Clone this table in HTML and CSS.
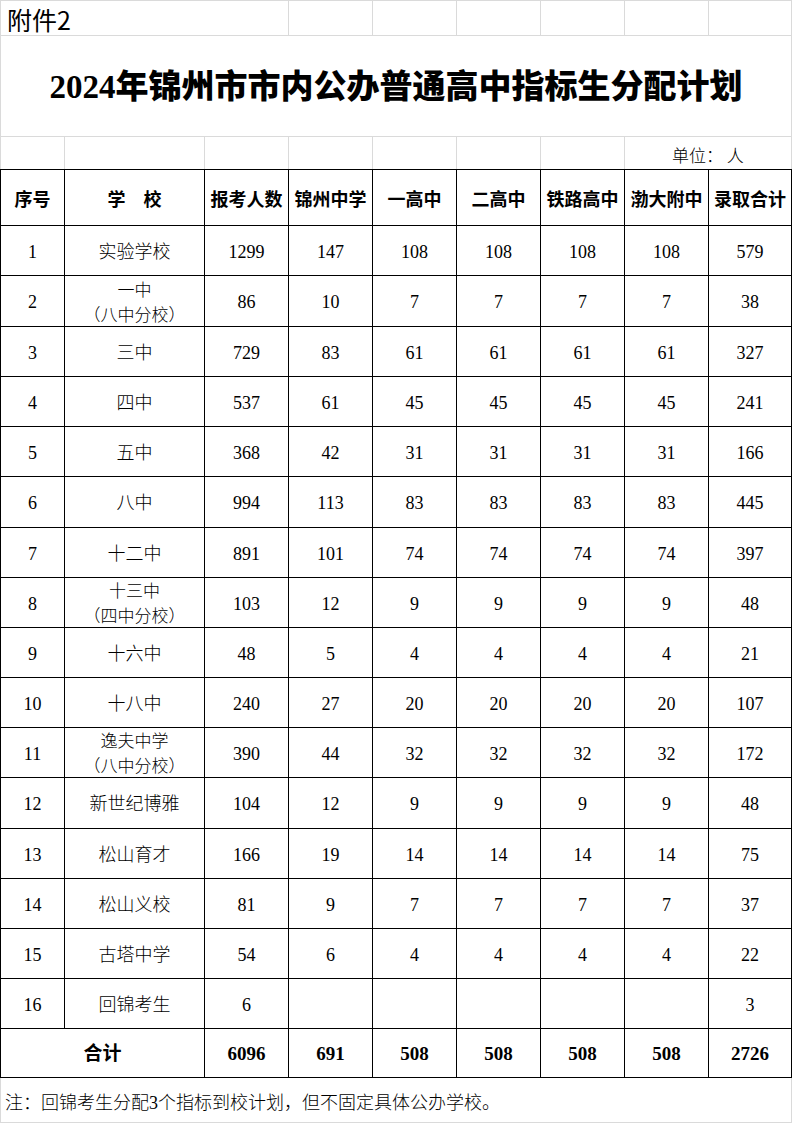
FILE: index.html
```html
<!DOCTYPE html>
<html lang="zh-CN">
<head>
<meta charset="utf-8">
<title>2024年锦州市市内公办普通高中指标生分配计划</title>
<link rel="stylesheet" href="styles.css">
</head>
<body>
<div class="sheet">
  <div class="top">
    <div class="cell attach span3">附件2</div>
    <div class="cell"></div><div class="cell"></div><div class="cell"></div>
    <div class="cell"></div><div class="cell"></div><div class="cell"></div>
    <div class="cell title span9"><span class="title-text">2024年锦州市市内公办普通高中指标生分配计划</span></div>
    <div class="cell"></div><div class="cell"></div><div class="cell"></div><div class="cell"></div>
    <div class="cell"></div><div class="cell"></div><div class="cell"></div>
    <div class="cell unit span2">单位：&nbsp;人</div>
  </div>
  <div class="table">
    <div class="cell head">序号</div>
    <div class="cell head">学　校</div>
    <div class="cell head">报考人数</div>
    <div class="cell head">锦州中学</div>
    <div class="cell head">一高中</div>
    <div class="cell head">二高中</div>
    <div class="cell head">铁路高中</div>
    <div class="cell head">渤大附中</div>
    <div class="cell head">录取合计</div>

    <div class="cell d">1</div><div class="cell d">实验学校</div><div class="cell d">1299</div><div class="cell d">147</div><div class="cell d">108</div><div class="cell d">108</div><div class="cell d">108</div><div class="cell d">108</div><div class="cell d">579</div>
    <div class="cell d">2</div><div class="cell d two">一中<br>（八中分校）</div><div class="cell d">86</div><div class="cell d">10</div><div class="cell d">7</div><div class="cell d">7</div><div class="cell d">7</div><div class="cell d">7</div><div class="cell d">38</div>
    <div class="cell d">3</div><div class="cell d">三中</div><div class="cell d">729</div><div class="cell d">83</div><div class="cell d">61</div><div class="cell d">61</div><div class="cell d">61</div><div class="cell d">61</div><div class="cell d">327</div>
    <div class="cell d">4</div><div class="cell d">四中</div><div class="cell d">537</div><div class="cell d">61</div><div class="cell d">45</div><div class="cell d">45</div><div class="cell d">45</div><div class="cell d">45</div><div class="cell d">241</div>
    <div class="cell d">5</div><div class="cell d">五中</div><div class="cell d">368</div><div class="cell d">42</div><div class="cell d">31</div><div class="cell d">31</div><div class="cell d">31</div><div class="cell d">31</div><div class="cell d">166</div>
    <div class="cell d">6</div><div class="cell d">八中</div><div class="cell d">994</div><div class="cell d">113</div><div class="cell d">83</div><div class="cell d">83</div><div class="cell d">83</div><div class="cell d">83</div><div class="cell d">445</div>
    <div class="cell d">7</div><div class="cell d">十二中</div><div class="cell d">891</div><div class="cell d">101</div><div class="cell d">74</div><div class="cell d">74</div><div class="cell d">74</div><div class="cell d">74</div><div class="cell d">397</div>
    <div class="cell d">8</div><div class="cell d two">十三中<br>（四中分校）</div><div class="cell d">103</div><div class="cell d">12</div><div class="cell d">9</div><div class="cell d">9</div><div class="cell d">9</div><div class="cell d">9</div><div class="cell d">48</div>
    <div class="cell d">9</div><div class="cell d">十六中</div><div class="cell d">48</div><div class="cell d">5</div><div class="cell d">4</div><div class="cell d">4</div><div class="cell d">4</div><div class="cell d">4</div><div class="cell d">21</div>
    <div class="cell d">10</div><div class="cell d">十八中</div><div class="cell d">240</div><div class="cell d">27</div><div class="cell d">20</div><div class="cell d">20</div><div class="cell d">20</div><div class="cell d">20</div><div class="cell d">107</div>
    <div class="cell d">11</div><div class="cell d two">逸夫中学<br>（八中分校）</div><div class="cell d">390</div><div class="cell d">44</div><div class="cell d">32</div><div class="cell d">32</div><div class="cell d">32</div><div class="cell d">32</div><div class="cell d">172</div>
    <div class="cell d">12</div><div class="cell d">新世纪博雅</div><div class="cell d">104</div><div class="cell d">12</div><div class="cell d">9</div><div class="cell d">9</div><div class="cell d">9</div><div class="cell d">9</div><div class="cell d">48</div>
    <div class="cell d">13</div><div class="cell d">松山育才</div><div class="cell d">166</div><div class="cell d">19</div><div class="cell d">14</div><div class="cell d">14</div><div class="cell d">14</div><div class="cell d">14</div><div class="cell d">75</div>
    <div class="cell d">14</div><div class="cell d">松山义校</div><div class="cell d">81</div><div class="cell d">9</div><div class="cell d">7</div><div class="cell d">7</div><div class="cell d">7</div><div class="cell d">7</div><div class="cell d">37</div>
    <div class="cell d">15</div><div class="cell d">古塔中学</div><div class="cell d">54</div><div class="cell d">6</div><div class="cell d">4</div><div class="cell d">4</div><div class="cell d">4</div><div class="cell d">4</div><div class="cell d">22</div>
    <div class="cell d">16</div><div class="cell d">回锦考生</div><div class="cell d">6</div><div class="cell d"></div><div class="cell d"></div><div class="cell d"></div><div class="cell d"></div><div class="cell d"></div><div class="cell d">3</div>

    <div class="cell total span2">合计</div>
    <div class="cell total">6096</div><div class="cell total">691</div><div class="cell total">508</div><div class="cell total">508</div><div class="cell total">508</div><div class="cell total">508</div><div class="cell total">2726</div>
  </div>
  <div class="note">注：回锦考生分配3个指标到校计划，但不固定具体公办学校。</div>
</div>
</body>
</html>
```

FILE: styles.css
```css
html, body {
  margin: 0;
  padding: 0;
  background: #fff;
}

.sheet {
  width: 792px;
  color: #000;
  font-family: "Liberation Serif", "Noto Sans CJK SC", serif;
}

.top,
.table {
  display: grid;
  grid-template-columns: 63px 139px 83px 83px 83px 83px 83px 83px 82px;
  gap: 1px;
}

.top {
  background: #dadada;
  padding: 1px 1px 0 1px;
  grid-template-rows: 34px 100px 32px;
}

.table {
  background: #000;
  padding: 1px;
  grid-template-rows: 55px 49px 50px 49px 49px 49px 50px 49px 49px 49px 49px 49px 50px 49px 49px 49px 49px 48px;
}

.cell {
  background: #fff;
  display: flex;
  align-items: center;
  justify-content: center;
  text-align: center;
  overflow: visible;
  white-space: nowrap;
}

.span2 { grid-column: span 2; }
.span3 { grid-column: span 3; }
.span9 { grid-column: span 9; }

.attach {
  justify-content: flex-start;
  align-items: flex-end;
  padding: 0 0 1px 6px;
  font-family: "Noto Sans CJK SC", sans-serif;
  font-size: 25px;
  line-height: 30px;
}

.title-text {
  font-family: "Liberation Serif", "Noto Sans CJK SC", serif;
  font-weight: 900;
  font-size: 33px;
  line-height: 40px;
  padding-top: 2px;
}

.unit {
  align-items: flex-end;
  padding-bottom: 3px;
  font-family: "Noto Sans CJK SC", sans-serif;
  font-weight: 300;
  font-size: 17px;
  line-height: 22px;
}

.head {
  font-family: "Noto Sans CJK SC", sans-serif;
  font-weight: 700;
  font-size: 18px;
  line-height: 24px;
}

.d {
  font-weight: 300;
  font-size: 18px;
  line-height: 25px;
  padding-top: 3px;
}

.two {
  font-size: 17px;
}

.total {
  font-weight: 700;
  font-size: 19px;
  line-height: 24px;
  padding-top: 2px;
}

.note {
  box-sizing: border-box;
  height: 45px;
  border: 1px solid #dadada;
  border-top: none;
  display: flex;
  align-items: flex-end;
  padding: 0 0 7px 4px;
  font-family: "Liberation Serif", "Noto Sans CJK SC", sans-serif;
  font-weight: 300;
  font-size: 18px;
  line-height: 24px;
  white-space: nowrap;
}
```
